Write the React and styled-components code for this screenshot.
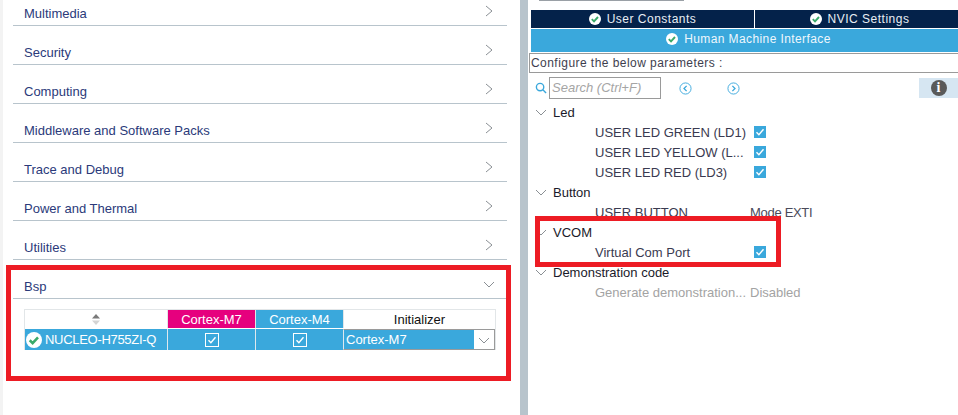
import styled, { createGlobalStyle } from 'styled-components';

const GlobalStyle = createGlobalStyle`
  html, body {
    margin: 0;
    padding: 0;
    background: #fff;
    overflow: hidden;
  }
  * {
    box-sizing: border-box;
  }
`;

const categories = [
  'Multimedia',
  'Security',
  'Computing',
  'Middleware and Software Packs',
  'Trace and Debug',
  'Power and Thermal',
  'Utilities',
];

const Chevron = ({ open }) => (
  <svg width="14" height="14" viewBox="0 0 14 14" fill="none" stroke="#8a8f94" strokeWidth="1">
    <path d={open ? 'M2 5l5 5 5-5' : 'M4 2l6 5-6 5'} />
  </svg>
);

const OkIcon = ({ size = 12 }) => (
  <svg width={size} height={size} viewBox="0 0 12 12">
    <circle cx="6" cy="6" r="6" fill="#fff" />
    <path d="M2.8 6.2l2.2 2.2 4-4.4" fill="none" stroke="#3aaa6a" strokeWidth="1.9" />
  </svg>
);

const Tick = ({ color = '#fff' }) => (
  <svg width="10" height="10" viewBox="0 0 10 10" fill="none" stroke={color} strokeWidth="1.4">
    <path d="M1.5 5.2l2.4 2.5 4.6-5.4" />
  </svg>
);

export default function App() {
  return (
    <Page>
      <GlobalStyle />
      <LeftPane>
        <LeftInner>
          {categories.map((name) => (
            <Category key={name}>
              <span>{name}</span>
              <Chevron />
            </Category>
          ))}
          <Category>
            <span>Bsp</span>
            <Chevron open />
          </Category>
          <BspTable>
            <HeaderRow>
              <SortCell>
                <svg width="10" height="13" viewBox="0 0 10 13">
                  <path d="M5 1l4 4.5H1z" fill="#7a7a7a" />
                  <path d="M5 12L1 7.5h8z" fill="#d4d4d4" />
                </svg>
              </SortCell>
              <HeadCell $bg="#e6007e">Cortex-M7</HeadCell>
              <HeadCell $bg="#3aa8dc">Cortex-M4</HeadCell>
              <HeadCell $bg="#fff" $color="#111">Initializer</HeadCell>
            </HeaderRow>
            <BodyRow>
              <NameCell>
                <OkIcon size={16} />
                NUCLEO-H755ZI-Q
              </NameCell>
              <BoxCell>
                <OutlineBox><Tick /></OutlineBox>
              </BoxCell>
              <BoxCell>
                <OutlineBox><Tick /></OutlineBox>
              </BoxCell>
              <SelectCell>
                <span>Cortex-M7</span>
                <SelectArrow><Chevron open /></SelectArrow>
              </SelectCell>
            </BodyRow>
          </BspTable>
        </LeftInner>
        <BspHighlight />
      </LeftPane>
      <Splitter />
      <RightPane>
        <TopLine />
        <TabRow>
          <Tab><OkIcon />User Constants</Tab>
          <Tab $inset="6px"><OkIcon />NVIC Settings</Tab>
        </TabRow>
        <ActiveTab><OkIcon />Human Machine Interface</ActiveTab>
        <ConfigBar>Configure the below parameters :</ConfigBar>
        <SearchRow>
          <svg width="12" height="12" viewBox="0 0 13 13" fill="none" stroke="#3aa8dc" strokeWidth="1.5">
            <circle cx="5.5" cy="5.5" r="4" />
            <path d="M8.5 8.5l3.5 3.5" />
          </svg>
          <SearchInput>Search (Ctrl+F)</SearchInput>
          <NavButton $left>
            <svg width="13" height="13" viewBox="0 0 14 14" fill="none" stroke="#3aa8dc">
              <circle cx="7" cy="7" r="6" />
              <path d="M8.2 4.2L5.4 7l2.8 2.8" strokeWidth="1.4" />
            </svg>
          </NavButton>
          <NavButton>
            <svg width="13" height="13" viewBox="0 0 14 14" fill="none" stroke="#3aa8dc">
              <circle cx="7" cy="7" r="6" />
              <path d="M5.8 4.2L8.6 7l-2.8 2.8" strokeWidth="1.4" />
            </svg>
          </NavButton>
          <InfoTile>
            <InfoDot>i</InfoDot>
          </InfoTile>
        </SearchRow>
        <Tree>
          <GroupRow><Chevron open />Led</GroupRow>
          <ParamRow>
            <ParamName>USER LED GREEN (LD1)</ParamName>
            <CheckBox><Tick /></CheckBox>
          </ParamRow>
          <ParamRow>
            <ParamName>USER LED YELLOW (L...</ParamName>
            <CheckBox><Tick /></CheckBox>
          </ParamRow>
          <ParamRow>
            <ParamName>USER LED RED (LD3)</ParamName>
            <CheckBox><Tick /></CheckBox>
          </ParamRow>
          <GroupRow><Chevron open />Button</GroupRow>
          <ParamRow>
            <ParamName>USER BUTTON</ParamName>
            <ParamValue>Mode EXTI</ParamValue>
          </ParamRow>
          <GroupRow><Chevron open />VCOM</GroupRow>
          <ParamRow>
            <ParamName>Virtual Com Port</ParamName>
            <CheckBox><Tick /></CheckBox>
          </ParamRow>
          <GroupRow><Chevron open />Demonstration code</GroupRow>
          <ParamRow>
            <ParamName $muted>Generate demonstration...</ParamName>
            <ParamValue $muted>Disabled</ParamValue>
          </ParamRow>
        </Tree>
        <VcomHighlight />
      </RightPane>
    </Page>
  );
}

const Page = styled.div`
  width: 958px;
  height: 415px;
  display: flex;
  overflow: hidden;
  font-family: 'Liberation Sans', Arial, sans-serif;
  font-size: 13px;
  background: #fff;
`;
const LeftPane = styled.div`
  position: relative;
  width: 520px;
  padding-left: 3px;
  background: #f3f3f3;
`;
const LeftInner = styled.div`
  height: 100%;
  background: #fff;
  padding: 0 13px 0 10px;
`;
const Category = styled.div`
  height: 39px;
  padding: 14px 11px 0 11px;
  display: flex;
  justify-content: space-between;
  align-items: center;
  border-bottom: 1px solid #b8c4cc;
  color: #2b3a7a;
  svg {
    margin-top: -4px;
  }
  &:first-child {
    height: 26px;
    align-items: flex-start;
    padding-top: 6px;
    svg {
      margin-top: -2px;
    }
  }
`;
const BspTable = styled.div`
  margin: 10px 0 0 11px;
  width: 472px;
  border: 1px solid #e2e6e8;
  border-bottom: 0;
`;
const HeaderRow = styled.div`
  display: grid;
  grid-template-columns: 142px 88px 88px 1fr;
  height: 18px;
`;
const SortCell = styled.div`
  display: flex;
  align-items: center;
  justify-content: center;
  background: #fff;
`;
const HeadCell = styled.div`
  display: flex;
  align-items: center;
  justify-content: center;
  border-left: 1px solid #e2e6e8;
  background: ${(p) => p.$bg};
  color: ${(p) => p.$color || '#fff'};
`;
const BodyRow = styled.div`
  display: grid;
  grid-template-columns: 142px 88px 88px 1fr;
  height: 21px;
  margin-top: 1px;
  background: #3aa8dc;
  color: #fff;
`;
const NameCell = styled.div`
  display: flex;
  align-items: center;
  gap: 3px;
  padding-left: 1px;
  letter-spacing: -0.3px;
`;
const BoxCell = styled.div`
  display: flex;
  align-items: center;
  justify-content: center;
  border-left: 1px solid #dfe8ee;
`;
const OutlineBox = styled.div`
  width: 14px;
  height: 14px;
  border: 1px solid #fff;
  display: flex;
  align-items: center;
  justify-content: center;
`;
const SelectCell = styled.div`
  display: flex;
  align-items: center;
  justify-content: space-between;
  padding-left: 2px;
  border: 1px solid #9a9a9a;
  border-left-color: #dfe8ee;
`;
const SelectArrow = styled.div`
  width: 20px;
  height: 100%;
  background: #fff;
  display: flex;
  align-items: center;
  justify-content: center;
`;
const BspHighlight = styled.div`
  position: absolute;
  left: 6px;
  top: 265px;
  width: 505px;
  height: 116px;
  border: 5px solid #ed1c24;
`;
const Splitter = styled.div`
  width: 8px;
  background: #b8c4cc;
`;
const RightPane = styled.div`
  position: relative;
  flex: 1;
  padding-left: 1px;
  background: #fff;
`;
const TopLine = styled.div`
  width: 145px;
  height: 1px;
  margin-left: 10px;
  background: #9aa0a6;
`;
const TabRow = styled.div`
  display: grid;
  grid-template-columns: 223px 1fr;
  gap: 1px;
  margin: 9px 0 0 2px;
  height: 18px;
`;
const Tab = styled.div`
  display: flex;
  align-items: center;
  justify-content: center;
  gap: 6px;
  padding-left: ${(p) => p.$inset || '0'};
  background: #04224a;
  color: #e8eef4;
  font-size: 12px;
  letter-spacing: 0.5px;
`;
const ActiveTab = styled.div`
  display: flex;
  align-items: center;
  justify-content: center;
  gap: 6px;
  height: 23px;
  margin: 1px 0 0 2px;
  padding: 0 0 4px 8px;
  background: #3aa8dc;
  color: #eef7fc;
  font-size: 12px;
  letter-spacing: 0.4px;
`;
const ConfigBar = styled.div`
  height: 20px;
  margin-top: 1px;
  padding-left: 1px;
  border: 1px solid #9a9a9a;
  border-right: 0;
  color: #3e3e4e;
  font-size: 12px;
  line-height: 18px;
  letter-spacing: 0.45px;
`;
const SearchRow = styled.div`
  display: flex;
  align-items: center;
  height: 22px;
  margin-top: 4px;
  padding-left: 6px;
`;
const SearchInput = styled.div`
  width: 112px;
  height: 22px;
  margin-left: 2px;
  padding-left: 2px;
  border: 1px solid #9a9a9a;
  color: #a5a5a5;
  font-style: italic;
  line-height: 20px;
`;
const NavButton = styled.div`
  display: flex;
  margin-left: ${(p) => (p.$left ? '18px' : '35px')};
`;
const InfoTile = styled.div`
  width: 39px;
  height: 20px;
  margin-left: auto;
  background: #d6e6f2;
  display: flex;
  align-items: center;
  justify-content: center;
`;
const InfoDot = styled.div`
  width: 16px;
  height: 16px;
  border-radius: 50%;
  background: #5a5a5a;
  color: #fff;
  font-family: 'Liberation Serif', serif;
  font-weight: bold;
  font-size: 14px;
  line-height: 16px;
  text-align: center;
`;
const Tree = styled.div`
  margin-top: 3px;
  padding-left: 5px;
`;
const GroupRow = styled.div`
  display: flex;
  align-items: center;
  gap: 5px;
  height: 20px;
  color: #1a1a2a;
`;
const ParamRow = styled.div`
  display: flex;
  align-items: center;
  height: 20px;
  padding-left: 61px;
`;
const ParamName = styled.div`
  width: 155px;
  white-space: nowrap;
  color: ${(p) => (p.$muted ? '#a3a3a3' : '#3a3a50')};
`;
const ParamValue = styled.div`
  color: ${(p) => (p.$muted ? '#a3a3a3' : '#4a4a5a')};
  letter-spacing: ${(p) => (p.$muted ? '0' : '-0.3px')};
`;
const CheckBox = styled.div`
  width: 12px;
  height: 12px;
  margin-left: 4px;
  background: #3aa8dc;
  display: flex;
  align-items: center;
  justify-content: center;
`;
const VcomHighlight = styled.div`
  position: absolute;
  left: 7px;
  top: 216px;
  width: 246px;
  height: 51px;
  border: 5px solid #ed1c24;
`;
